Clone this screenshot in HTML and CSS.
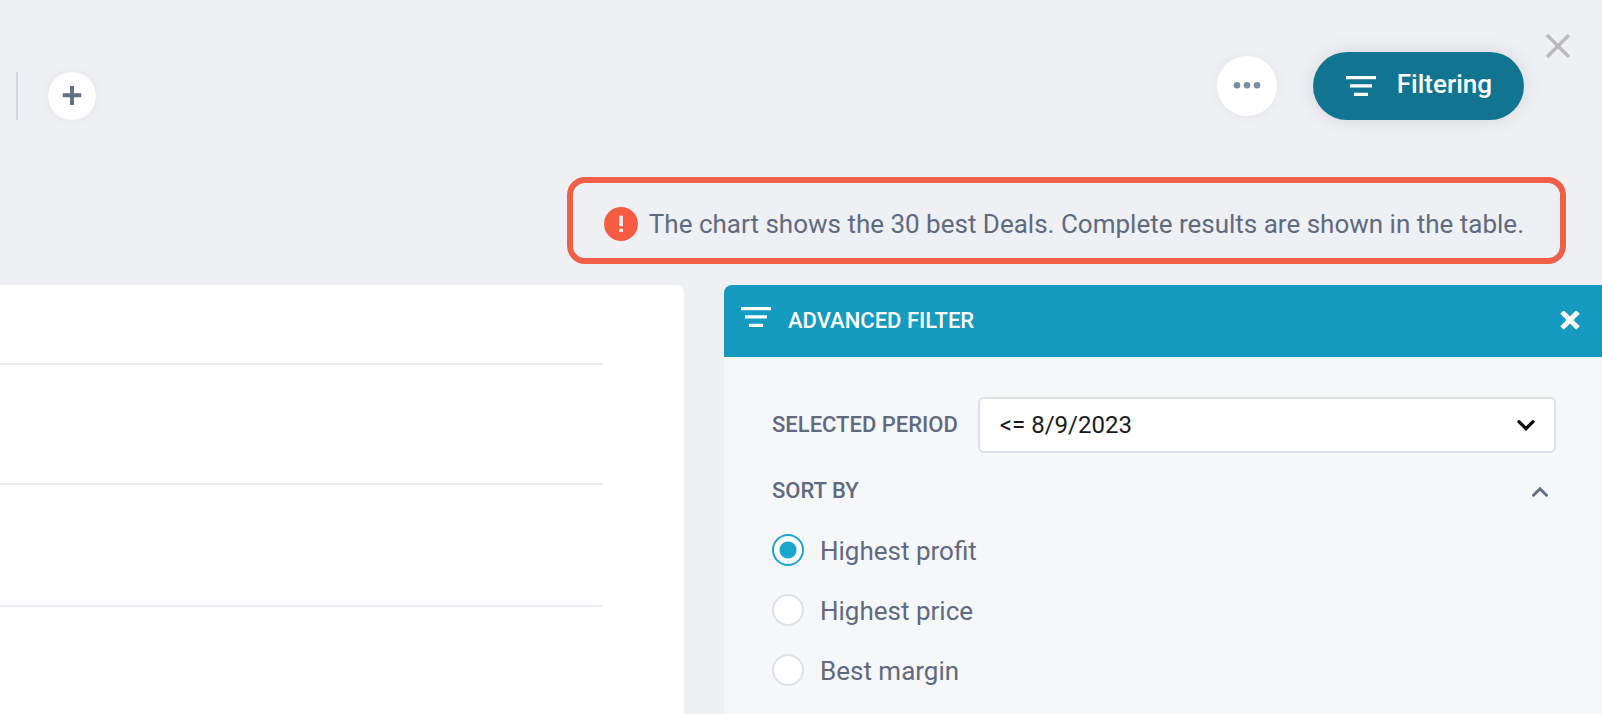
FILE: index.html
```html
<!DOCTYPE html>
<html lang="en">
<head>
  <meta charset="UTF-8">
  <meta name="viewport" content="width=device-width, initial-scale=1.0">
  <title>Deals - Advanced filter</title>
  <link rel="stylesheet" href="styles.css">
</head>
<body>

  <header class="topbar">
    <div class="tabs">
      <span class="divider"></span>
      <button class="round-btn" type="button" aria-label="Add tab">
        <svg width="20" height="20" viewBox="0 0 20 20"><path d="M10 0v19M.7 9.300h18.600" stroke="#647087" stroke-width="4"/></svg>
      </button>
    </div>
    <div class="actions">
      <button class="round-btn large" type="button" aria-label="More options">
        <svg width="28" height="8" viewBox="0 0 28 8" fill="#7d8ba5"><circle cx="4" cy="3.300" r="3.3"/><circle cx="14" cy="3.300" r="3.3"/><circle cx="24" cy="3.300" r="3.3"/></svg>
      </button>
      <button class="filter-btn" type="button">
        <svg width="30" height="20" viewBox="0 0 30 20" fill="#fff"><path d="M0 0h30v3.3H0zM4 8.3h22v3.3H4zM8 16.7h14V20H8z"/></svg>
        <span>Filtering</span>
      </button>
    </div>
    <button class="close-btn" type="button" aria-label="Close">
      <svg width="24" height="24" viewBox="0 0 24 24"><path d="M1 1l22 22M23 1L1 23" stroke="#bbb" stroke-width="3.500"/></svg>
    </button>
  </header>

  <div class="notice" role="status">
    <svg width="34" height="34" viewBox="0 0 34 34"><circle cx="17" cy="17" r="17" fill="#f75c43"/><path d="M15.300 8.700h3.600v10.500h-3.600zM15.300 21.700h3.600V25h-3.600z" fill="#eef0f4"/></svg>
    <span>The chart shows the 30 best Deals. Complete results are shown in the table.</span>
  </div>

  <main class="content">
    <section class="chart">
      <div class="grid-line"></div>
      <div class="grid-line"></div>
      <div class="grid-line"></div>
    </section>

    <aside class="filter">
      <div class="filter-header">
        <svg class="filter-icon" width="30" height="20" viewBox="0 0 30 20" fill="#fff"><path d="M0 0h30v3.3H0zM4 8.3h22v3.3H4zM8 16.7h14V20H8z"/></svg>
        <h2>ADVANCED FILTER</h2>
        <button class="icon-btn" type="button" aria-label="Close filter">
          <svg width="20" height="20" viewBox="0 0 20 20"><path d="M2 1l16 16M18 1L2 17" stroke="#fff" stroke-width="5"/></svg>
        </button>
      </div>
      <form class="filter-body">
        <div class="period">
          <label for="period">SELECTED PERIOD</label>
          <div class="select-wrap">
            <select id="period">
              <option>&lt;= 8/9/2023</option>
            </select>
            <svg class="arrow" width="18" height="12" viewBox="0 0 18 12" fill="none"><path d="M2 2.7l7 7 7-7" stroke="#000" stroke-width="3.2" stroke-linecap="round"/></svg>
          </div>
        </div>
        <div class="sort-head">
          <h3 id="sortTitle">SORT BY</h3>
          <button class="icon-btn" type="button" aria-label="Collapse sort options">
            <svg width="16" height="12" viewBox="0 0 16 12" fill="none"><path d="M1.500 10.300L8 3.800l6.500 6.500" stroke="#647087" stroke-width="3" stroke-linecap="round"/></svg>
          </button>
        </div>
        <div class="options" role="radiogroup" aria-labelledby="sortTitle">
          <label class="option"><input type="radio" name="sort" checked><span>Highest profit</span></label>
          <label class="option"><input type="radio" name="sort"><span>Highest price</span></label>
          <label class="option"><input type="radio" name="sort"><span>Best margin</span></label>
        </div>
      </form>
    </aside>
  </main>

</body>
</html>
```

FILE: styles.css
```css
* {
  box-sizing: border-box;
}

body {
  margin: 0;
  min-height: 100vh;
  display: flex;
  flex-direction: column;
  background: #eef0f4;
  color: #5f6a80;
  font-family: Roboto, sans-serif;
  font-size: 26px;
  line-height: 32px;
}

button {
  border: none;
  padding: 0;
  background: none;
  font: inherit;
  cursor: pointer;
}

svg {
  display: block;
  flex-shrink: 0;
}

.topbar {
  position: relative;
  display: flex;
  justify-content: space-between;
  padding: 52px 78px 0 16px;
}

.tabs {
  display: flex;
  gap: 30px;
  padding-top: 20px;
}

.divider {
  width: 2px;
  height: 48px;
  background: #d5d6e0;
}

.round-btn {
  display: flex;
  align-items: center;
  justify-content: center;
  width: 48px;
  height: 48px;
  border-radius: 50%;
  background: #fff;
  box-shadow: 0 0 12px rgba(0, 0, 0, 0.05);
}

.round-btn.large {
  width: 60px;
  height: 60px;
}

.actions {
  display: flex;
  align-items: center;
  gap: 36px;
}

.filter-btn {
  display: flex;
  align-items: center;
  gap: 21px;
  height: 68px;
  padding: 0 32px 0 33px;
  border-radius: 34px;
  background: #117592;
  color: #fff;
  font-weight: 500;
  box-shadow: 0 0 20px rgba(0, 0, 0, 0.1);
}

.filter-btn span {
  padding-bottom: 4px;
}

.close-btn {
  position: absolute;
  top: 34px;
  right: 32px;
}

.notice {
  display: flex;
  align-items: center;
  align-self: flex-end;
  gap: 11px;
  margin: 57px 36px 21px;
  padding: 24px 36px 17px 31px;
  border: 6px solid #f05f48;
  border-radius: 18px;
}

.content {
  flex: 1;
  display: grid;
  grid-template-columns: 684fr 878fr;
  gap: 40px;
}

.chart {
  padding-right: 81px;
  background: #fff;
  border-top-right-radius: 8px;
}

.grid-line {
  height: 120px;
  border-bottom: 2px solid #eeeff4;
}

.grid-line:first-child {
  height: 80px;
}

.grid-line:last-child {
  height: 122px;
}

.filter {
  background: #f6f7f9;
  border-top-left-radius: 8px;
  overflow: hidden;
}

.filter-header {
  display: flex;
  align-items: center;
  height: 72px;
  padding: 0 22px 0 17px;
  background: #159ac0;
  color: #fff;
}

.filter-icon {
  margin-bottom: 8px;
}

h2,
h3,
.period label {
  margin: 0;
  font-size: 22px;
  font-weight: 500;
}

.filter-header h2 {
  flex: 1;
  margin-left: 17px;
}

.filter-body {
  padding: 40px 46px 28px 48px;
}

.period {
  display: flex;
  align-items: center;
  gap: 20px;
}

.select-wrap {
  position: relative;
  flex: 1;
}

.select-wrap select {
  display: block;
  width: 100%;
  height: 56px;
  padding: 0 48px 0 20px;
  border: 2px solid #dfe1ea;
  border-radius: 6px;
  background: #fff;
  color: #1a1b22;
  font-family: inherit;
  font-size: 24px;
  appearance: none;
}

.arrow {
  position: absolute;
  top: 22px;
  right: 21px;
  pointer-events: none;
}

.sort-head {
  display: flex;
  align-items: center;
  justify-content: space-between;
  margin-top: 22px;
  padding-right: 8px;
}

.options {
  display: flex;
  flex-direction: column;
  gap: 26px;
  margin-top: 26px;
}

.option {
  display: flex;
  align-items: center;
  gap: 16px;
  cursor: pointer;
}

.option span {
  padding-top: 2px;
}

.option input {
  width: 32px;
  height: 32px;
  margin: 0;
  border: 2px solid #dfe1ea;
  border-radius: 50%;
  background: #fff;
  appearance: none;
}

.option input:checked {
  border-color: #1aa7cb;
  background: radial-gradient(circle, #1aa7cb 8px, #fff 9px);
}
```
